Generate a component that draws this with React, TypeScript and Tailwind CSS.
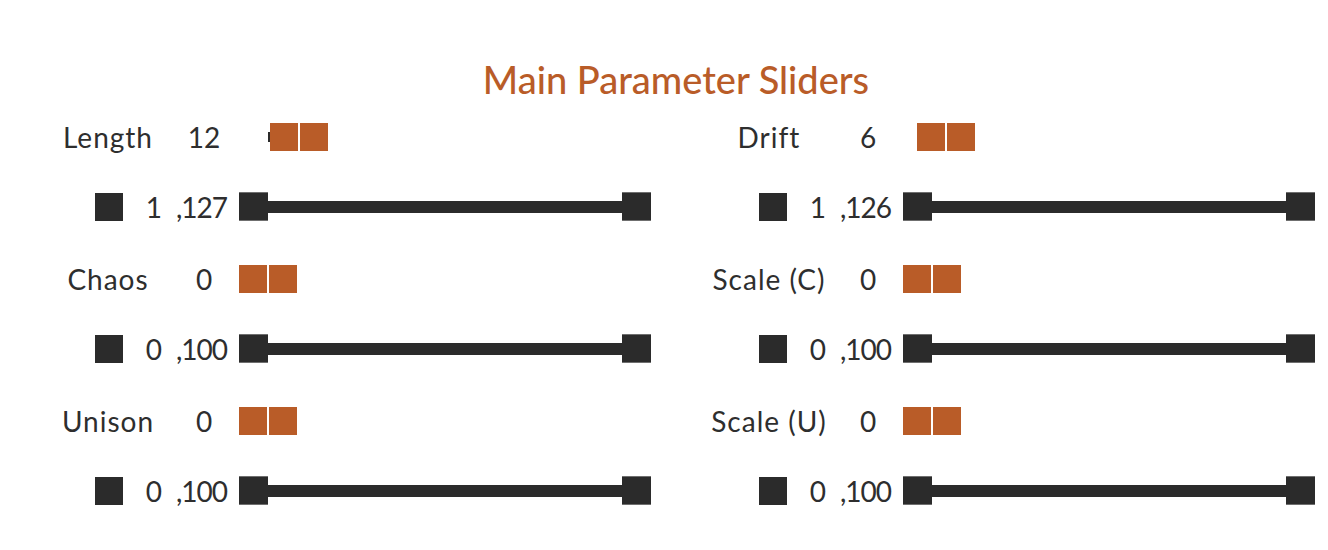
import React from 'react';

type HeaderProps = {
  label: string;
  value: string;
  labelCls: string;
  valueCls: string;
  boxCls: string;
  tick?: boolean;
};

function Header({ label, value, labelCls, valueCls, boxCls, tick }: HeaderProps) {
  return (
    <div className="flex h-[28px] items-start text-[28px] leading-[28px] text-[#2e2e2e]">
      <div className={labelCls}>{label}</div>
      <div className={valueCls}>{value}</div>
      <div className={boxCls}>
        {tick && <div className="mt-[9px] h-[10px] w-[2px] bg-[#2b2b2b]" />}
        <div className="h-[28px] w-[28px] bg-[#b95c28]" />
        <div className="ml-[2px] h-[28px] w-[28px] bg-[#b95c28]" />
      </div>
    </div>
  );
}

function Thumb() {
  return <div className="h-[29px] w-[29px] shrink-0 border-y border-[#6f6f6f] bg-[#2b2b2b]" />;
}

function SliderRow({ min, max, top }: { min: string; max: string; top: string }) {
  return (
    <div className={top + ' flex h-[29px] items-start text-[28px] leading-[28px] text-[#2e2e2e]'}>
      <div className="ml-[95px] mt-[1px] h-[28px] w-[28px] shrink-0 bg-[#2b2b2b]" />
      <div className="mt-[1px] w-[39px] shrink-0 text-right">{min}</div>
      <div className="ml-[14px] mt-[1px] w-[63px] shrink-0 whitespace-nowrap tracking-[-1px]">,{max}</div>
      <div className="flex h-[29px] w-[412px] shrink-0 items-center">
        <Thumb />
        <div className="h-[12px] flex-1 bg-[#2b2b2b]" />
        <Thumb />
      </div>
    </div>
  );
}

type Item = {
  label: string;
  value: string;
  min: string;
  max: string;
  boxCls: string;
  tick?: boolean;
};

function Column({ items, side }: { items: Item[]; side: 'left' | 'right' }) {
  const labelCls =
    side === 'left'
      ? 'ml-[38px] w-[140px] shrink-0 whitespace-nowrap text-center tracking-[1px]'
      : 'ml-[35px] w-[140px] shrink-0 whitespace-nowrap text-center tracking-[1px]';
  const valueCls =
    side === 'left'
      ? 'ml-[6px] w-[40px] shrink-0 text-center'
      : 'ml-[9px] w-[40px] shrink-0 text-center';
  return (
    <div className="flex w-[664px] flex-col">
      {items.map((it, i) => (
        <div key={it.label} className={i === 0 ? 'flex flex-col' : 'mt-[44px] flex flex-col'}>
          <Header
            label={it.label}
            value={it.value}
            labelCls={labelCls}
            valueCls={valueCls}
            boxCls={it.boxCls}
            tick={it.tick}
          />
          <SliderRow min={it.min} max={it.max} top="mt-[41px]" />
        </div>
      ))}
    </div>
  );
}

export default function App() {
  const left: Item[] = [
    { label: 'Length', value: '12', min: '1', max: '127', boxCls: 'ml-[44px] flex', tick: true },
    { label: 'Chaos', value: '0', min: '0', max: '100', boxCls: 'ml-[15px] flex' },
    { label: 'Unison', value: '0', min: '0', max: '100', boxCls: 'ml-[15px] flex' },
  ];
  const right: Item[] = [
    { label: 'Drift', value: '6', min: '1', max: '126', boxCls: 'ml-[29px] flex' },
    { label: 'Scale (C)', value: '0', min: '0', max: '100', boxCls: 'ml-[15px] flex' },
    { label: 'Scale (U)', value: '0', min: '0', max: '100', boxCls: 'ml-[15px] flex' },
  ];
  return (
    <div
      className="h-[550px] w-[1328px] overflow-hidden bg-white"
      style={{ fontFamily: 'Lato, "Open Sans", sans-serif' }}
    >
      <div className="pl-[24px] pt-[60px] text-center text-[38px] font-medium leading-[38px] text-[#b95c28]">
        Main Parameter Sliders
      </div>
      <div className="mt-[25px] flex">
        <Column items={left} side="left" />
        <Column items={right} side="right" />
      </div>
    </div>
  );
}
